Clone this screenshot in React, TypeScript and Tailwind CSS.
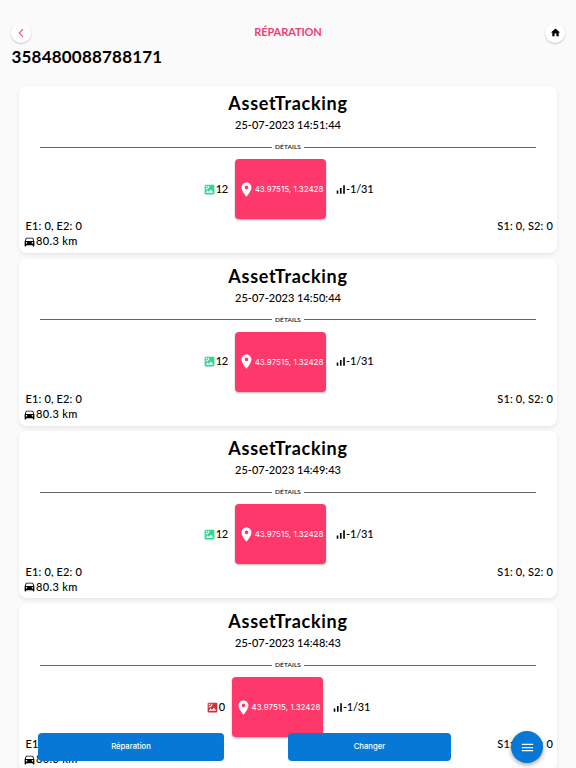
import { MdArrowBackIosNew, MdDirectionsCar, MdHome, MdLocationOn, MdMenu, MdSatellite, MdSignalCellularAlt } from "react-icons/md";

type Report = { date: string; satellites: number; color: string };

const reports: Report[] = [
  { date: "25-07-2023 14:51:44", satellites: 12, color: "#2fd696" },
  { date: "25-07-2023 14:50:44", satellites: 12, color: "#2fd696" },
  { date: "25-07-2023 14:49:43", satellites: 12, color: "#2fd696" },
  { date: "25-07-2023 14:48:43", satellites: 0, color: "#d3303a" },
];

function ReportCard({ report }: { report: Report }) {
  return (
    <section className="h-[167px] shrink-0 rounded-lg bg-white shadow-[0_2px_4px_rgba(0,0,0,0.08)] flex flex-col">
      <h2 className="mt-[5px] h-6 text-center text-[18px] leading-6 font-bold tracking-[0.7px]">AssetTracking</h2>
      <p className="h-5 text-center text-[11px] leading-5 font-medium">{report.date}</p>
      <div className="mt-1 mx-[21px] h-4 flex items-center gap-[3px]">
        <hr className="flex-1 border-t border-[#666]" />
        <span className="text-[6.5px] leading-4 font-medium tracking-[0.1px]">DÉTAILS</span>
        <hr className="flex-1 border-t border-[#666]" />
      </div>
      <div className="mt-1 h-[60px] flex items-center justify-center text-[11px] font-medium">
        <MdSatellite size={13} color={report.color} />
        <span className="tracking-[-0.2px]">{report.satellites}</span>
        <button className="ml-[7px] mr-2 h-[60px] w-[91px] rounded bg-[#ff386b] shadow-[0_1px_2px_rgba(0,0,0,0.3)] flex items-center justify-center text-white">
          <MdLocationOn size={17} className="shrink-0" />
          <span className="font-['Inter',sans-serif] text-[8px] font-normal whitespace-nowrap">43.97515, 1.32428</span>
        </button>
        <MdSignalCellularAlt size={13} className="-mr-px" />
        <span className="tracking-[-0.2px]">-1/31</span>
      </div>
      <div className="pl-[6.5px] pr-1 h-[15px] flex items-center justify-between text-[11px] font-medium tracking-[0.15px]">
        <span>E1: 0, E2: 0</span>
        <span>S1: 0, S2: 0</span>
      </div>
      <div className="pl-1 h-[15px] flex items-center text-[11px] font-medium tracking-[0.35px]">
        <MdDirectionsCar size={13} />
        <span>80.3 km</span>
      </div>
    </section>
  );
}

export default function App() {
  return (
    <main className="relative flex h-[768px] w-[576px] flex-col overflow-hidden bg-[#fafafa] font-['Lato',sans-serif] text-black">
      <header className="mt-[23px] h-[19px] px-[11px] flex items-center justify-between">
        <button className="flex size-5 items-center justify-center rounded-full bg-white shadow-[0_1px_2px_rgba(0,0,0,0.22)]">
          <MdArrowBackIosNew size={10} color="#ef3d72" />
        </button>
        <h1 className="text-[11px] font-bold tracking-[-0.1px] text-[#f03e73]">RÉPARATION</h1>
        <button className="flex size-5 items-center justify-center rounded-full bg-white shadow-[0_1px_2px_rgba(0,0,0,0.22)]">
          <MdHome size={11} />
        </button>
      </header>
      <p className="mt-[3px] ml-[11.5px] h-6 text-[17px] leading-6 font-bold tracking-[0.2px]">358480088788171</p>
      <div className="mt-[17px] mx-[19px] flex flex-col gap-[5.7px]">
        {reports.map((report) => (
          <ReportCard key={report.date} report={report} />
        ))}
      </div>
      <div className="absolute inset-x-0 bottom-[5px] flex items-center pl-[38px] font-['Inter',sans-serif] text-[7.7px] font-medium text-white">
        <button className="h-7 w-[186px] rounded bg-[#0878d7]">Réparation</button>
        <button className="ml-16 h-7 w-[163px] rounded bg-[#0878d7]">Changer</button>
        <button className="ml-[60px] flex size-8 items-center justify-center rounded-full bg-[#0878d7] shadow-[0_2px_4px_rgba(0,0,0,0.35)]">
          <MdMenu size={15} />
        </button>
      </div>
    </main>
  );
}
